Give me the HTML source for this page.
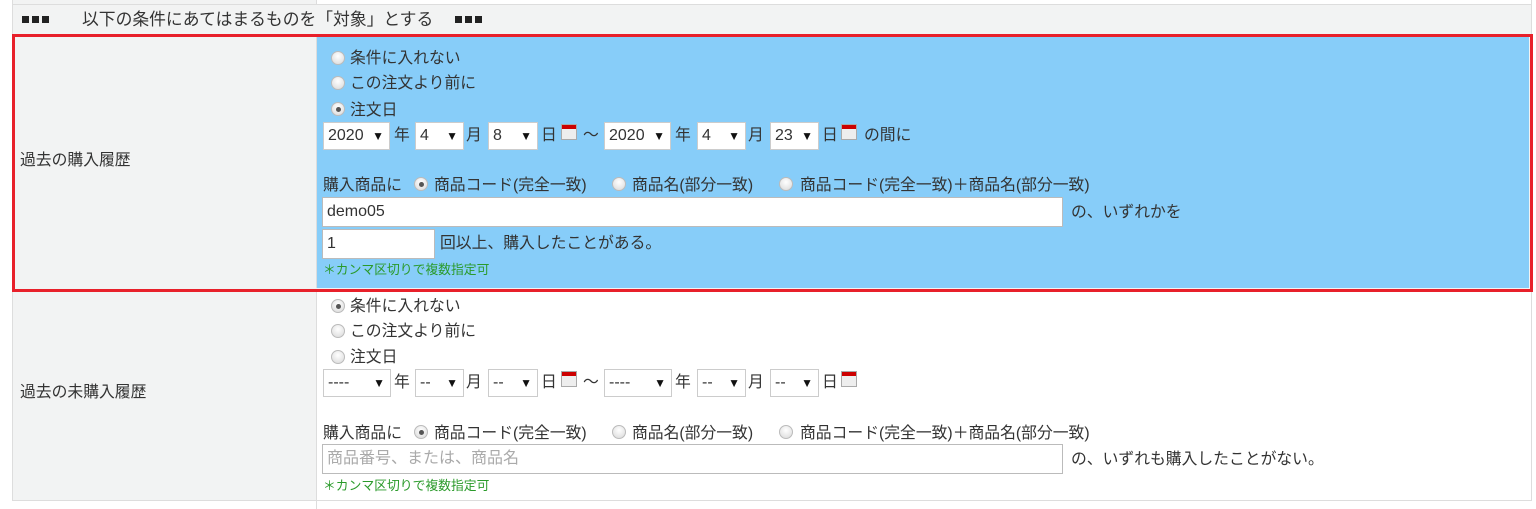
<!DOCTYPE html>
<html><head><meta charset="utf-8"><style>
*{margin:0;padding:0;box-sizing:border-box}
body{width:1536px;height:509px;background:#fff;position:relative;overflow:hidden;font-family:"Liberation Sans","Noto Sans CJK JP",sans-serif;font-size:15.8px;color:#333}
.a{position:absolute;white-space:nowrap;line-height:18px}
.r{position:absolute;width:14px;height:14px;border-radius:50%;border:1px solid #bbb;background:radial-gradient(circle at 50% 35%,#fff,#d8d8d8)}
.r.on::after{content:"";position:absolute;left:3.5px;top:3.5px;width:5px;height:5px;border-radius:50%;background:#555}
.s{position:absolute;height:28px;background:#fff;border:1px solid #ccc;line-height:26px;padding-left:4px;font-size:16px}
.s::after{content:"▼";position:absolute;right:5px;top:0;font-size:12px;color:#111}
.cal{position:absolute;width:16px;height:16px;background:linear-gradient(#c00 0 4px,#eee 4px);border:1px solid #aaa}
.in{position:absolute;height:30px;background:#fff;border:1px solid #bbb;line-height:28px;padding-left:4px;font-size:16px}
.g{color:#2a9a2a;font-size:12.8px}
.sq{position:absolute;top:16px;width:7px;height:7px;background:#222}
</style></head><body>
<div class="a" style="left:12px;top:0;width:1520px;height:5px;border:1px solid #ddd;border-top:none;background:#f2f3f3"></div>
<div class="a" style="left:316px;top:0;width:1215px;height:5px;background:#fff;border-left:1px solid #ddd;border-bottom:1px solid #ddd"></div>
<div class="a" style="left:12px;top:5px;width:1520px;height:30px;background:#f2f3f3;border-left:1px solid #ddd;border-right:1px solid #ddd"></div>
<div class="sq" style="left:22px"></div><div class="sq" style="left:32px"></div><div class="sq" style="left:42px"></div>
<div class="a" style="left:82px;top:11px;font-size:16.8px">以下の条件にあてはまるものを「対象」とする</div>
<div class="sq" style="left:455px"></div><div class="sq" style="left:465px"></div><div class="sq" style="left:475px"></div>
<div class="a" style="left:12px;top:34px;width:1521px;height:258px;border:3px solid #e8202a;background:#f2f3f3"></div>
<div class="a" style="left:316px;top:37px;width:1213px;height:251px;background:#87cdf9;border-left:1px solid #ddd"></div>
<div class="a" style="left:20px;top:152px">過去の購入履歴</div>
<div class="r" style="left:331px;top:51px"></div><div class="a" style="left:350px;top:50px">条件に入れない</div>
<div class="r" style="left:331px;top:76px"></div><div class="a" style="left:350px;top:75px">この注文より前に</div>
<div class="r on" style="left:331px;top:102px"></div><div class="a" style="left:350px;top:102px">注文日</div>
<div class="s" style="left:323px;top:122px;width:67px">2020</div><div class="a" style="left:394px;top:127px">年</div>
<div class="s" style="left:415px;top:122px;width:49px">4</div><div class="a" style="left:466px;top:127px">月</div>
<div class="s" style="left:488px;top:122px;width:50px">8</div><div class="a" style="left:541px;top:127px">日</div>
<div class="cal" style="left:561px;top:124px"></div><div class="a" style="left:583px;top:127px">～</div>
<div class="s" style="left:604px;top:122px;width:67px">2020</div><div class="a" style="left:675px;top:127px">年</div>
<div class="s" style="left:697px;top:122px;width:49px">4</div><div class="a" style="left:748px;top:127px">月</div>
<div class="s" style="left:770px;top:122px;width:49px">23</div><div class="a" style="left:822px;top:127px">日</div>
<div class="cal" style="left:841px;top:124px"></div><div class="a" style="left:864px;top:127px">の間に</div>
<div class="a" style="left:323px;top:177px">購入商品に</div>
<div class="r on" style="left:414px;top:177px"></div><div class="a" style="left:434px;top:177px">商品コード(完全一致)</div>
<div class="r" style="left:612px;top:177px"></div><div class="a" style="left:632px;top:177px">商品名(部分一致)</div>
<div class="r" style="left:779px;top:177px"></div><div class="a" style="left:800px;top:177px">商品コード(完全一致)＋商品名(部分一致)</div>
<div class="in" style="left:322px;top:197px;width:741px">demo05</div><div class="a" style="left:1071px;top:204px">の、いずれかを</div>
<div class="in" style="left:322px;top:229px;width:113px">1</div><div class="a" style="left:440px;top:235px">回以上、購入したことがある。</div>
<div class="a g" style="left:323px;top:261px">＊カンマ区切りで複数指定可</div>
<div class="a" style="left:12px;top:292px;width:1520px;height:209px;background:#f2f3f3;border-left:1px solid #ddd;border-right:1px solid #ddd;border-bottom:1px solid #ddd"></div>
<div class="a" style="left:316px;top:292px;width:1215px;height:208px;background:#fff;border-left:1px solid #ddd"></div>
<div class="a" style="left:20px;top:384px">過去の未購入履歴</div>
<div class="r on" style="left:331px;top:299px"></div><div class="a" style="left:350px;top:298px">条件に入れない</div>
<div class="r" style="left:331px;top:324px"></div><div class="a" style="left:350px;top:323px">この注文より前に</div>
<div class="r" style="left:331px;top:350px"></div><div class="a" style="left:350px;top:349px">注文日</div>
<div class="s" style="left:323px;top:369px;width:68px">----</div><div class="a" style="left:394px;top:374px">年</div>
<div class="s" style="left:415px;top:369px;width:49px">--</div><div class="a" style="left:466px;top:374px">月</div>
<div class="s" style="left:488px;top:369px;width:50px">--</div><div class="a" style="left:541px;top:374px">日</div>
<div class="cal" style="left:561px;top:371px"></div><div class="a" style="left:583px;top:374px">～</div>
<div class="s" style="left:604px;top:369px;width:68px">----</div><div class="a" style="left:675px;top:374px">年</div>
<div class="s" style="left:697px;top:369px;width:49px">--</div><div class="a" style="left:748px;top:374px">月</div>
<div class="s" style="left:770px;top:369px;width:49px">--</div><div class="a" style="left:822px;top:374px">日</div>
<div class="cal" style="left:841px;top:371px"></div>
<div class="a" style="left:323px;top:425px">購入商品に</div>
<div class="r on" style="left:414px;top:425px"></div><div class="a" style="left:434px;top:425px">商品コード(完全一致)</div>
<div class="r" style="left:612px;top:425px"></div><div class="a" style="left:632px;top:425px">商品名(部分一致)</div>
<div class="r" style="left:779px;top:425px"></div><div class="a" style="left:800px;top:425px">商品コード(完全一致)＋商品名(部分一致)</div>
<div class="in" style="left:322px;top:444px;width:741px;color:#aaa">商品番号、または、商品名</div><div class="a" style="left:1071px;top:451px">の、いずれも購入したことがない。</div>
<div class="a g" style="left:323px;top:477px">＊カンマ区切りで複数指定可</div>
<div class="a" style="left:316px;top:501px;width:1215px;height:8px;background:#fff;border-left:1px solid #ddd"></div>
</body></html>
